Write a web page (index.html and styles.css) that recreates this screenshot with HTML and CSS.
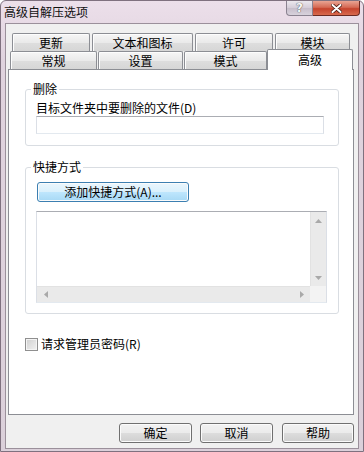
FILE: index.html
```html
<!DOCTYPE html>
<html lang="zh-CN">
<head>
    <meta charset="UTF-8">
    <title>高级自解压选项</title>
    <link rel="stylesheet" href="styles.css">
</head>
<body>
    <div class="window">
        <div class="titlebar">
            <span class="title">高级自解压选项</span>
            <div class="caption-buttons">
                <span class="cap-btn help">?</span>
                <span class="cap-btn close">
                    <svg width="11" height="9" viewBox="0 0 11 9">
                        <path d="M1.5 1 L9.5 8 M9.5 1 L1.5 8" stroke="#4a1a12" stroke-width="3.6" stroke-linecap="round"/>
                        <path d="M1.5 1 L9.5 8 M9.5 1 L1.5 8" stroke="#ffffff" stroke-width="2" stroke-linecap="round"/>
                    </svg>
                </span>
            </div>
        </div>

        <div class="client">
            <div class="tabctl">
                <!-- back row of tabs -->
                <div class="tabrow back">
                    <div class="tab tab-update">更新</div>
                    <div class="tab tab-text">文本和图标</div>
                    <div class="tab tab-license">许可</div>
                    <div class="tab tab-module">模块</div>
                </div>
                <!-- front row, last one is selected -->
                <div class="tabrow front">
                    <div class="tab tab-general">常规</div>
                    <div class="tab tab-setup">设置</div>
                    <div class="tab tab-mode">模式</div>
                    <div class="tab tab-advanced selected">高级</div>
                </div>

                <div class="page">
                    <fieldset class="group group-delete">
                        <legend>删除</legend>
                        <label class="field-label">目标文件夹中要删除的文件(D)</label>
                        <div class="textbox"></div>
                    </fieldset>

                    <fieldset class="group group-shortcut">
                        <legend>快捷方式</legend>
                        <div class="btn btn-hot btn-add">添加快捷方式(A)...</div>
                        <div class="listbox">
                            <div class="list-area"></div>
                            <div class="vscroll">
                                <svg width="7" height="4" viewBox="0 0 7 4"><path d="M0 4 L3.5 0 L7 4 Z" fill="#a9a9a9"/></svg>
                                <svg width="7" height="4" viewBox="0 0 7 4"><path d="M0 0 L3.5 4 L7 0 Z" fill="#a9a9a9"/></svg>
                            </div>
                            <div class="hscroll">
                                <svg width="4" height="7" viewBox="0 0 4 7"><path d="M4 0 L0 3.5 L4 7 Z" fill="#a9a9a9"/></svg>
                                <svg width="4" height="7" viewBox="0 0 4 7"><path d="M0 0 L4 3.5 L0 7 Z" fill="#a9a9a9"/></svg>
                            </div>
                            <div class="corner"></div>
                        </div>
                    </fieldset>

                    <div class="check-row">
                        <span class="checkbox"></span>
                        <span>请求管理员密码(R)</span>
                    </div>
                </div>
            </div>

            <div class="dialog-buttons">
                <div class="btn btn-ok">确定</div>
                <div class="btn btn-cancel">取消</div>
                <div class="btn btn-help">帮助</div>
            </div>
        </div>
    </div>
</body>
</html>
```

FILE: styles.css
```css
body {
    margin: 0;
    font-family: "Noto Sans CJK SC", "Liberation Sans", sans-serif;
    font-size: 12px;
    color: #000;
    background-color: #fff;
}
.window {
    width: 364px;
    height: 452px;
    box-sizing: border-box;
    display: flex;
    flex-direction: column;
    padding: 0 4px 2px 4px;
    border: 1px solid #7f717f;
    border-radius: 6px 6px 0 0;
    background: linear-gradient(#ecdfea, #e0d3de 60px, #dbd0da);
}
.titlebar {
    height: 22px;
    display: flex;
    align-items: flex-start;
}
.title {
    align-self: center;
    margin-left: -1px;
    margin-top: -1px;
    line-height: 14px;
    color: #111;
}
.caption-buttons {
    margin-left: auto;
    margin-right: -1px;
    display: flex;
}
.cap-btn {
    height: 15px;
    display: flex;
    align-items: center;
    justify-content: center;
    box-sizing: border-box;
}
.help {
    width: 27px;
    border: 1px solid #8a8290;
    border-top: none;
    border-radius: 0 0 0 4px;
    background: linear-gradient(#ece8ee, #d4ccd8 50%, #c6bdca 51%, #d8d2dc);
    color: #f6f6f6;
    font-family: "DejaVu Sans", sans-serif;
    font-size: 12px;
    font-weight: bold;
    line-height: 13px;
    text-shadow: 0 0 1px #555, 0 0 1px #555;
}
.close {
    width: 47px;
    border: 1px solid #6b2a22;
    border-top: none;
    border-left: none;
    border-radius: 0 0 4px 0;
    background: linear-gradient(#e9a493, #d56a55 45%, #c5432d 55%, #d86a4e);
}
.client {
    flex: 1;
    display: flex;
    flex-direction: column;
    border: 1px solid #9b909b;
    background-color: #f0f0f0;
    padding: 9px 4px 0 2px;
}
.tabrow {
    display: flex;
    height: 18px;
}
.tabrow.back {
    margin-left: 4px;
}
.tabrow.front {
    margin-left: 2px;
}
.tab {
    box-sizing: border-box;
    height: 18px;
    border: 1px solid #8c8e94;
    border-bottom: none;
    border-radius: 2px 2px 0 0;
    background: linear-gradient(#f6f6f6, #eaeaea 50%, #dedede 51%, #d6d6d6);
    box-shadow: inset 1px 1px 0 #fdfdfd;
    text-align: center;
    line-height: 17px;
    margin-right: 1px;
}
.tabrow.back .tab {
    margin-right: 2px;
    padding-top: 1px;
    line-height: 15px;
}
.tab-update { width: 78px; }
.tab-text { width: 101px; }
.tab-license { width: 78px; }
.tab-module { width: 75px; }
.tab-general { width: 87px; }
.tab-setup { width: 85px; }
.tab-mode { width: 83px; margin-right: 0 !important; }
.tab-advanced { width: 86px; }
.tab.selected {
    position: relative;
    z-index: 1;
    height: 21px;
    margin-top: -2px;
    margin-bottom: -1px;
    background: #fff;
    box-shadow: none;
    line-height: 17px;
    padding-top: 1px;
}
.page {
    box-sizing: border-box;
    width: 346px;
    height: 346px;
    border: 1px solid #8c8e94;
    background-color: #fff;
    padding: 0 14px 0 16px;
}
.group {
    margin: 0;
    border: 1px solid #d9dde2;
    border-radius: 3px;
    box-shadow: 1px 1px 0 #fff inset;
}
.group legend {
    padding: 0 2px;
    margin-left: -5px;
    line-height: 14px;
}
.group-delete {
    margin-top: 12px;
    padding: 5px 14px 11px 10px;
}
.field-label {
    display: block;
    line-height: 14px;
}
.textbox {
    margin-top: 1px;
    width: 288px;
    height: 18px;
    box-sizing: border-box;
    border: 1px solid #dbdfe6;
    border-top-color: #abadb3;
    border-bottom-color: #e3e9ef;
    background-color: #fff;
}
.group-shortcut {
    margin-top: 14px;
    padding: 8px 10px 10px 10px;
}
.btn {
    box-sizing: border-box;
    height: 20px;
    border: 1px solid #707070;
    border-radius: 3px;
    background: linear-gradient(#f2f2f2, #ebebeb 50%, #dddddd 51%, #cfcfcf);
    box-shadow: inset 0 0 0 1px #fbfbfb;
    text-align: center;
    line-height: 17px;
}
.btn-hot {
    border-color: #3c7fb1;
    background: linear-gradient(#eaf6fd, #d9f0fc 50%, #bee6fd 51%, #a7d9f5);
}
.btn-add {
    width: 152px;
    margin-left: 1px;
}
.listbox {
    margin-top: 9px;
    width: 291px;
    height: 92px;
    box-sizing: border-box;
    border: 1px solid #dbdfe6;
    border-top-color: #abadb3;
    border-bottom-color: #e3e9ef;
    display: grid;
    grid-template-columns: 1fr 16px;
    grid-template-rows: 1fr 16px;
}
.list-area {
    background-color: #fff;
}
.vscroll {
    background-color: #eaeaea;
    border-left: 1px solid #e2e2e2;
    display: flex;
    flex-direction: column;
    align-items: center;
    justify-content: space-between;
    padding: 7px 0 6px;
}
.hscroll {
    background-color: #eaeaea;
    border-top: 1px solid #e2e2e2;
    display: flex;
    align-items: center;
    justify-content: space-between;
    padding: 0 6px 0 7px;
}
.corner {
    background-color: #f3f3f3;
}
.check-row {
    margin-top: 23px;
    display: flex;
    align-items: center;
    gap: 3px;
    line-height: 14px;
}
.checkbox {
    width: 13px;
    height: 13px;
    box-sizing: border-box;
    border: 1px solid #8f8f8f;
    background: linear-gradient(135deg, #cfcfcf, #f2f2f2);
    box-shadow: inset 0 0 0 1px #f4f4f4;
}
.dialog-buttons {
    display: flex;
    justify-content: flex-end;
    margin-top: 8px;
}
.btn-ok {
    width: 73px;
    margin-right: 8px;
}
.btn-cancel {
    width: 73px;
    margin-right: 9px;
}
.btn-help {
    width: 72px;
}
```
